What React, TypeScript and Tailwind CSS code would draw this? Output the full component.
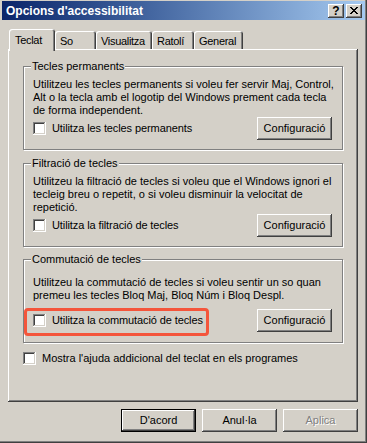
import React from "react";

const RAISED =
  "shadow-[inset_-1px_-1px_#404040,inset_1px_1px_#fff,inset_-2px_-2px_#808080,inset_2px_2px_#D4D0C8]";
const SUNKEN =
  "shadow-[inset_-1px_-1px_#fff,inset_1px_1px_#808080,inset_-2px_-2px_#D4D0C8,inset_2px_2px_#404040]";

function Button({ label, isDefault, disabled }: { label: string; isDefault?: boolean; disabled?: boolean }) {
  if (isDefault) {
    return (
      <div className="w-[75px] h-[23px] border border-black bg-[#D4D0C8]">
        <div className={`w-full h-full flex items-center justify-center ${RAISED}`}>{label}</div>
      </div>
    );
  }
  return (
    <div
      className={`w-[75px] h-[23px] bg-[#D4D0C8] flex items-center justify-center ${RAISED} ${
        disabled ? "text-[#808080] [text-shadow:1px_1px_0_#fff]" : ""
      }`}
    >
      {label}
    </div>
  );
}

function Checkbox() {
  return <div className={`w-[13px] h-[13px] shrink-0 bg-white ${SUNKEN}`} />;
}

function Group({
  legend,
  lines,
  check,
  padTop,
  rowGap,
  highlight,
}: {
  legend: string;
  lines: string[];
  check: string;
  padTop: string;
  rowGap: string;
  highlight?: boolean;
}) {
  return (
    <div className="relative w-[320px] h-[84px] border border-[#808080] shadow-[1px_1px_0_#fff,inset_1px_1px_0_#fff]">
      <span className="absolute left-[7px] top-[-7px] px-[1px] bg-[#D4D0C8] leading-[13px]">{legend}</span>
      <div className={`${padTop} pl-[9px] leading-[13px]`}>
        {lines.map((l) => (
          <div key={l} className="whitespace-nowrap">
            {l}
          </div>
        ))}
      </div>
      <div className={`${rowGap} flex items-center justify-between pl-[9px] pr-[10px] h-[23px]`}>
        <div className="flex items-center gap-[6px]">
          <Checkbox />
          <span className="tracking-[-0.1px]">{check}</span>
        </div>
        <Button label="Configuració" />
      </div>
      {highlight && (
        <div className="absolute left-[0px] top-[48px] w-[185px] h-[28px] border-[3px] border-[#F4553B] rounded-[4px]" />
      )}
    </div>
  );
}

const TABS = [
  { label: "Teclat", w: "w-[46px]" },
  { label: "So", w: "w-[41px]" },
  { label: "Visualitza", w: "w-[56px]" },
  { label: "Ratolí", w: "w-[42px]" },
  { label: "General", w: "w-[49px]" },
];

export default function App() {
  return (
    <div
      className="w-[367px] h-[443px] bg-[#D4D0C8] pl-[2px] pr-[2px] pt-[1px] pb-[2px] flex flex-col text-[11px] text-black font-['Liberation_Sans',Arial,sans-serif] shadow-[inset_-1px_-1px_#404040,inset_-2px_-2px_#808080] overflow-hidden"
    >
      {/* title bar */}
      <div className="h-[19px] shrink-0 flex items-center justify-between pl-[4px] pr-[3px] bg-gradient-to-r from-[#0A246A] to-[#A6CAF0]">
        <span className="text-white font-bold text-[12px] leading-none">Opcions d'accessibilitat</span>
        <div className="flex gap-[2px]">
          <div className={`w-[16px] h-[14px] bg-[#D4D0C8] flex items-center justify-center font-bold text-[12px] leading-none ${RAISED}`}>
            ?
          </div>
          <div className={`w-[16px] h-[14px] bg-[#D4D0C8] flex items-center justify-center ${RAISED}`}>
            <svg width="8" height="7" viewBox="0 0 8 7" shapeRendering="crispEdges">
              <path d="M0 0h2v1h-2zM6 0h2v1h-2zM1 1h2v1h-2zM5 1h2v1h-2zM2 2h4v1h-4zM3 3h2v1h-2zM2 4h4v1h-4zM1 5h2v1h-2zM5 5h2v1h-2zM0 6h2v1h-2zM6 6h2v1h-2z" fill="#000" />
            </svg>
          </div>
        </div>
      </div>

      <div className="flex-1 flex flex-col pl-[6px] pr-[7px] pt-[9px]">
        {/* tabs */}
        <div className="h-[20px] flex items-end pl-[1px]">
          {TABS.map((t, i) =>
            i === 0 ? (
              <div
                key={t.label}
                className={`${t.w} h-[22px] -mb-[2px] relative z-10 bg-[#D4D0C8] rounded-t-[3px] pl-[6px] pt-[3px] tracking-[-0.3px] shadow-[inset_1px_1px_#fff,inset_-1px_0_#404040,inset_-2px_0_#808080]`}
              >
                {t.label}
              </div>
            ) : (
              <div
                key={t.label}
                className={`${t.w} h-[18px] bg-[#D4D0C8] rounded-t-[3px] pl-[5px] pt-[2px] tracking-[-0.3px] whitespace-nowrap shadow-[inset_1px_1px_#fff,inset_-1px_0_#404040,inset_-2px_0_#808080]`}
              >
                {t.label}
              </div>
            )
          )}
        </div>

        {/* panel */}
        <div className="h-[353px] flex flex-col pl-[15px] pt-[17px] shadow-[inset_-1px_-1px_#404040,inset_1px_1px_#fff,inset_-2px_-2px_#808080]">
          <Group
            legend="Tecles permanents"
            lines={[
              "Utilitzeu les tecles permanents si voleu fer servir Maj, Control,",
              "Alt o la tecla amb el logotip del Windows prement cada tecla",
              "de forma independent.",
            ]}
            check="Utilitza les tecles permanents"
            padTop="pt-[11px]"
            rowGap="mt-0"
          />
          <div className="h-[13px]" />
          <Group
            legend="Filtració de tecles"
            lines={[
              "Utilitzeu la filtració de tecles si voleu que el Windows ignori el",
              "tecleig breu o repetit, o si voleu disminuir la velocitat de",
              "repetició.",
            ]}
            check="Utilitza la filtració de tecles"
            padTop="pt-[11px]"
            rowGap="mt-0"
          />
          <div className="h-[12px]" />
          <Group
            legend="Commutació de tecles"
            lines={[
              "Utilitzeu la commutació de tecles si voleu sentir un so quan",
              "premeu les tecles Bloq Maj, Bloq Núm i Bloq Despl.",
            ]}
            check="Utilitza la commutació de tecles"
            padTop="pt-[16px]"
            rowGap="mt-[7px]"
            highlight
          />
          <div className="mt-[7px] flex items-center gap-[6px]">
            <Checkbox />
            <span>Mostra l'ajuda addicional del teclat en els programes</span>
          </div>
        </div>

        {/* buttons */}
        <div className="mt-[7px] flex justify-end gap-[6px]">
          <Button label="D'acord" isDefault />
          <Button label="Anul·la" />
          <Button label="Aplica" disabled />
        </div>
      </div>
    </div>
  );
}
